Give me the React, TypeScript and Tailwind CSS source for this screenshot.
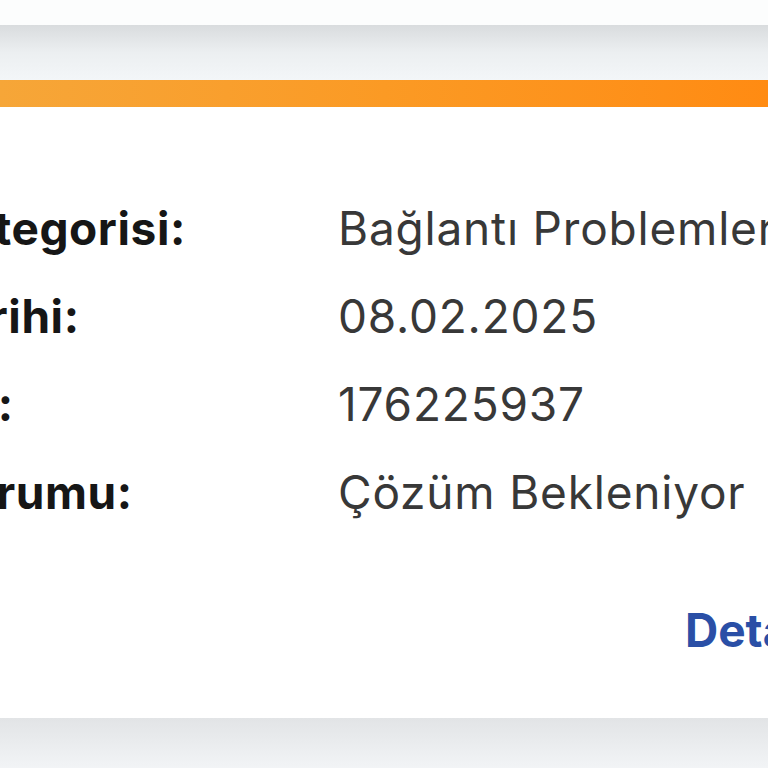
import React from 'react';

const rows = [
  { label: 'Talep Kategorisi:', value: 'Bağlantı Problemleri' },
  { label: 'Talep Tarihi:', value: '08.02.2025' },
  { label: 'Talep No:', value: '176225937' },
  { label: 'Talep Durumu:', value: 'Çözüm Bekleniyor' },
];

export default function App() {
  return (
    <div className="min-h-screen w-[768px] overflow-hidden bg-[#f1f3f5] font-['Inter',sans-serif]">
      <div className="h-[25px] bg-[#fcfdfd]" />
      <div className="h-[55px] bg-linear-to-b from-[#d9dcde] via-[#eceff1] to-[#f3f6f8]" />
      <div className="h-[27px] bg-linear-to-r from-[#f6a638] via-[#fb9a24] to-[#ff8b12]" />

      <div className="bg-white pt-[77px] pb-[44px]">
        <div className="ml-[-204px] flex flex-col">
          {rows.map((r) => (
            <div key={r.label} className="flex h-[88px] items-center whitespace-nowrap text-[46px] leading-[88px]">
              <div className="w-[542px] shrink-0 font-bold tracking-[0.6px] text-[#161616]">{r.label}</div>
              <div className="tracking-[0.8px] text-[#383838]">{r.value}</div>
            </div>
          ))}
        </div>
        <div className="mt-[50px] flex h-[88px] items-center whitespace-nowrap pl-[685px] text-[46px] font-bold leading-[88px] text-[#2a4fa6]">
          Detaylar
        </div>
      </div>

      <div className="h-[50px] bg-linear-to-b from-[#e2e4e6] to-[#f2f4f6]" />
    </div>
  );
}
